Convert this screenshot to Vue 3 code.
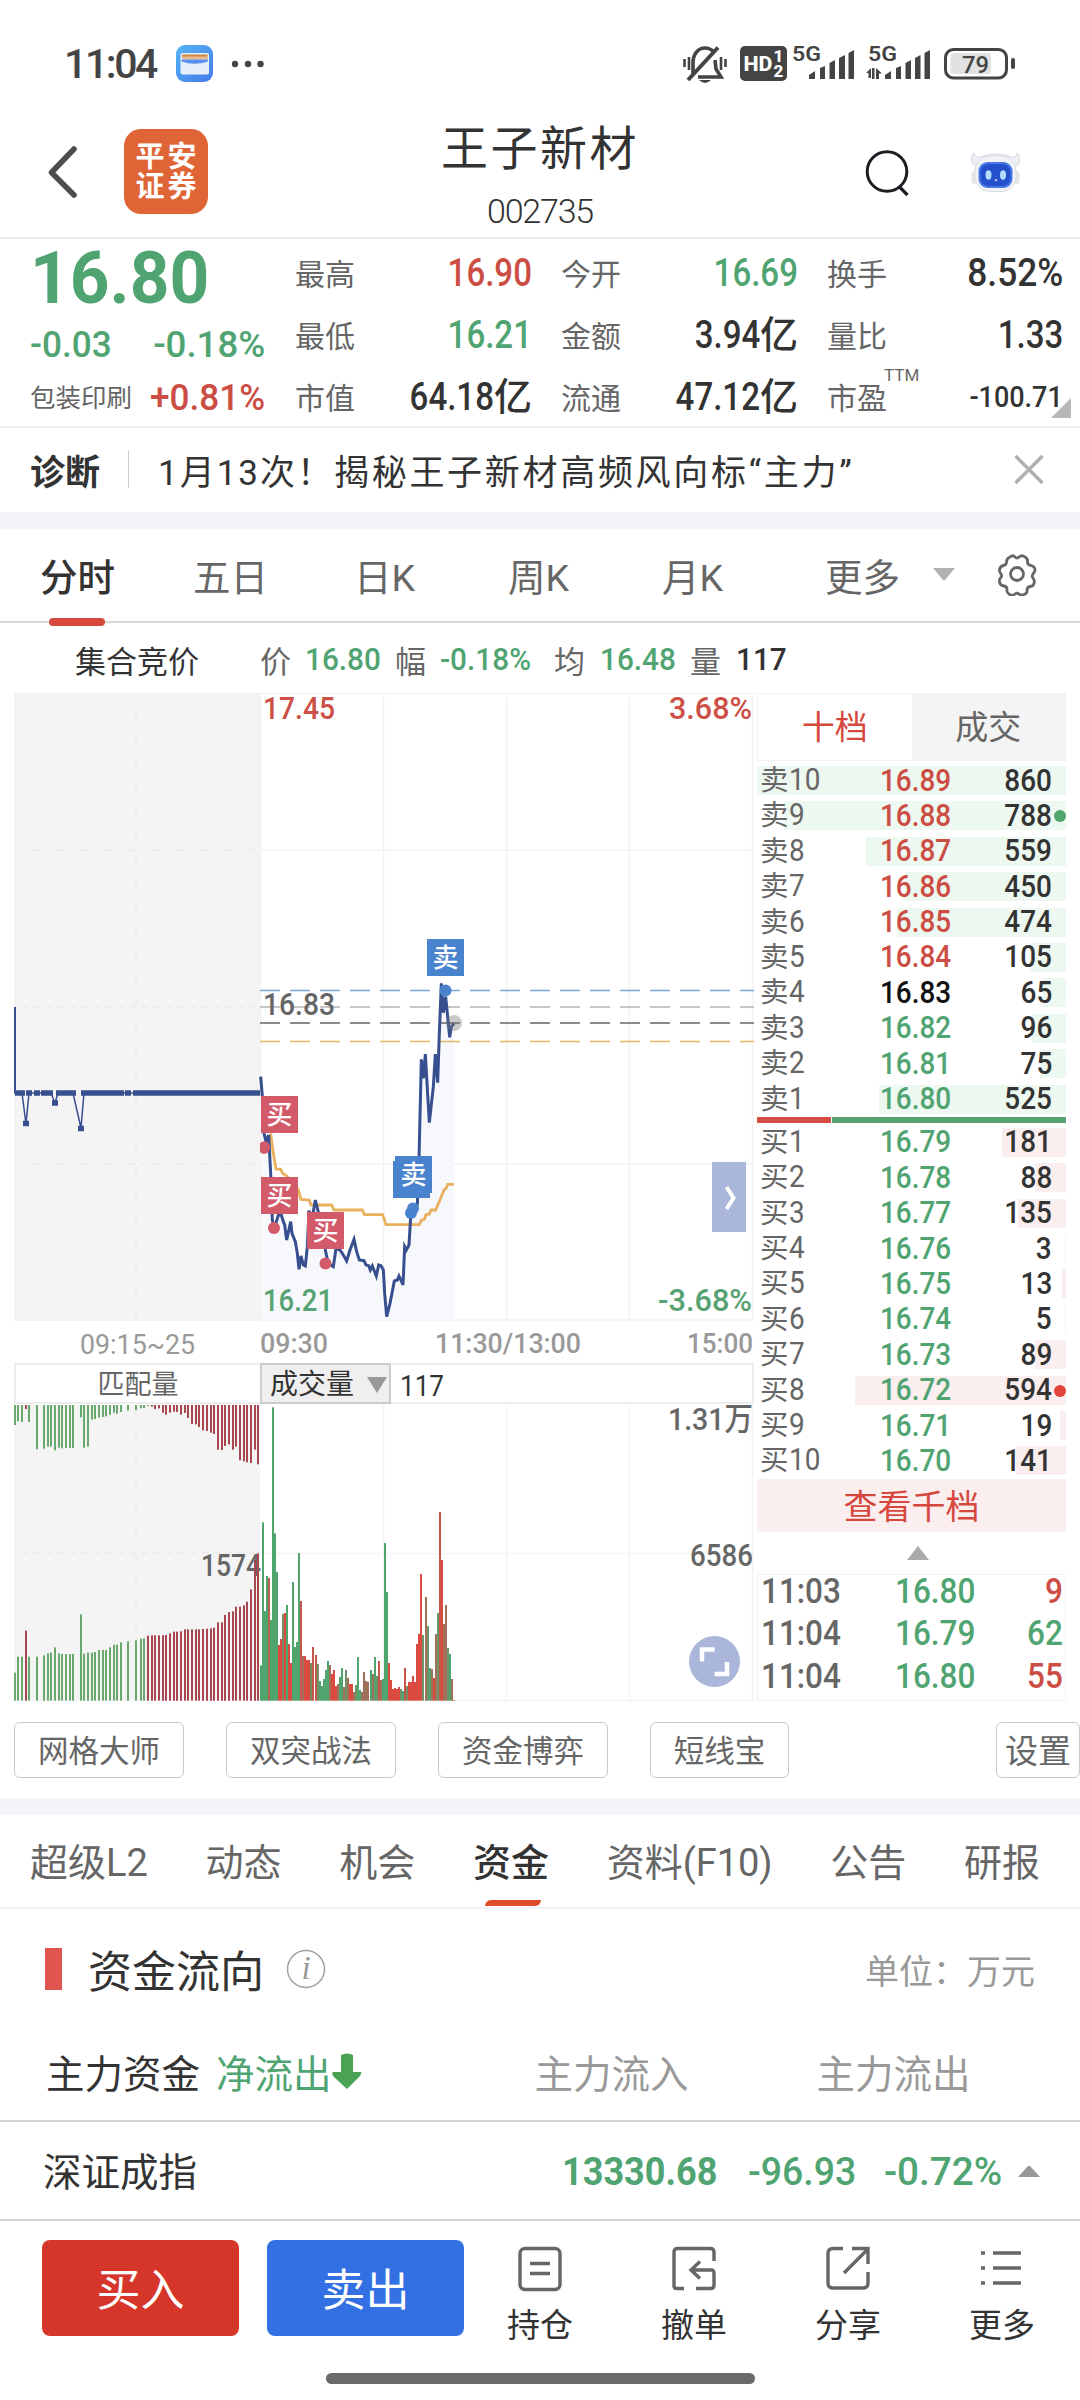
<template>
  <div class="page">
    <!-- status bar -->
    <div class="status">
      <span class="clock">11:04</span>
      <svg class="wallet" width="38" height="38" viewBox="0 0 38 38">
        <defs>
          <linearGradient id="wg" x1="0" y1="0" x2="1" y2="1">
            <stop offset="0" stop-color="#55b4f5" />
            <stop offset="1" stop-color="#467bea" />
          </linearGradient>
        </defs>
        <rect width="37" height="37" rx="9" fill="url(#wg)" />
        <rect x="4.500" y="8" width="28.500" height="21.500" rx="2" fill="#e6f0fd" />
        <rect x="6" y="9.500" width="25.500" height="4" fill="#d08646" />
        <rect x="6" y="11.500" width="25.500" height="3" fill="#eab98a" />
        <path d="M5.500 14.500h26.500v2q-13.500 4.500-26.500 0z" fill="#5a90ec" />
      </svg>
      <svg class="dots" width="34" height="8" viewBox="0 0 34 8">
        <circle cx="4" cy="4" r="3.200" /><circle cx="17" cy="4" r="3.200" /><circle cx="29.500" cy="4" r="3.200" />
      </svg>
      <svg class="signals" width="340" height="44" viewBox="680 42 340 44">
        <g fill="none" stroke="#444" stroke-width="3.600">
          <path d="M693 75V63c0-9 5-15 12-15 4 0 7 2 9 4M715 60l1 9 5 8h-23" />
          <path d="M718 47.500L688 80" stroke-width="4" />
          <path d="M684.500 59v8M689 57v13M725.500 59v8M721 57v13" stroke-width="2.600" />
        </g>
        <path d="M699 80h12q-6 6-12 0z" fill="#444" />
        <rect x="740" y="46" width="47" height="35" rx="5" fill="#444" />
        <text x="743.500" y="71" fill="#fff" font-size="21" font-weight="800" textLength="29" lengthAdjust="spacingAndGlyphs">HD</text>
        <text x="773.500" y="62" fill="#fff" font-size="17" font-weight="800">1</text>
        <text x="773.500" y="77" fill="#fff" font-size="17" font-weight="800">2</text>
        <g fill="#444">
          <text x="792" y="61" font-size="21" font-weight="600" textLength="29" lengthAdjust="spacingAndGlyphs">5G</text>
          <path d="M809 79v-4l6-4v8zM820 79V68l5-2v13zM829.500 79V63l5.500-3v19zM839 79V58l6-3v24zM848.500 79V53l5.500-3v29z" />
          <text x="868" y="61" font-size="21" font-weight="600" textLength="29" lengthAdjust="spacingAndGlyphs">5G</text>
          <path d="M866 73l5-5v10h-2.500v-5zM872 68h2.500v11h-2.500zM876 79V68l6 5.500h-3V79z" />
          <path d="M885 79v-4l6-4v8zM896 79V68l5-2v13zM905.500 79V63l5.500-3v19zM915 79V58l5.500-3v24zM924.500 79V53l5.500-3v29z" />
          <rect x="1011" y="58" width="4" height="11" rx="2" />
          <rect x="950.500" y="53" width="40.500" height="21" rx="3" fill="#e2e2e2" />
          <rect x="945.500" y="49.500" width="61" height="28.500" rx="8" fill="none" stroke="#444" stroke-width="3" />
          <text x="962" y="72.500" font-size="24" font-weight="500" textLength="27" lengthAdjust="spacingAndGlyphs">79</text>
        </g>
      </svg>
    </div>

    <!-- header -->
    <header class="header">
      <svg class="back" width="32" height="56" viewBox="0 0 32 56">
        <path d="M28 5L5.500 28.500 28 51" fill="none" stroke="#4d4d4d" stroke-width="5.500" stroke-linecap="round" stroke-linejoin="round" />
      </svg>
      <div class="logo"><span>平安</span><span>证券</span></div>
      <div class="title">
        <div class="name">王子新材</div>
        <div class="code">002735</div>
      </div>
      <svg class="search" width="46" height="50" viewBox="0 0 46 50">
        <circle cx="23" cy="22.500" r="19.800" fill="none" stroke="#1b1d22" stroke-width="3" />
        <path d="M35.500 38l8 8" stroke="#1b1d22" stroke-width="3.200" />
      </svg>
      <svg class="robot" width="52" height="44" viewBox="0 0 52 44">
        <path d="M7 17C0 14 0 6 4 3c1 4 3 5 6 4Q26 1 41 7c4 1 6-1 6-4 4 4 4 11-2 14z" fill="#eceef3" stroke="#d6d9e0" />
        <rect x="1.500" y="21" width="6" height="13" rx="3" fill="#e9e3e4" /><rect x="43.500" y="21" width="6" height="13" rx="3" fill="#e9e3e4" />
        <rect x="5" y="6" width="41" height="35.500" rx="15" fill="#f2f3f8" stroke="#dadde6" />
        <rect x="8.500" y="12" width="34" height="26" rx="9" fill="#4a78e8" />
        <rect x="10.500" y="14" width="30" height="22" rx="8" fill="#2450cc" />
        <ellipse cx="18.500" cy="25" rx="3" ry="4.800" fill="#b8dcff" /><ellipse cx="33" cy="25" rx="3" ry="4.800" fill="#b8dcff" />
        <path d="M24.500 29.500h3l-1.500 2z" fill="#fff" />
      </svg>
    </header>

    <!-- quote -->
    <section class="quote">
      <div class="main">
        <div class="price"><span class="num">16.80</span></div>
        <div class="chg green"><span class="num">-0.03</span><span class="num end pct">-0.18%</span></div>
        <div class="sector"><span class="sname">包装印刷</span><span class="num end red">+0.81%</span></div>
      </div>
      <div class="stats">
        <div v-for="s in stats" :key="s.label" class="stat">
          <span class="slabel">{{ s.label }}<sup v-if="s.sup">{{ s.sup }}</sup></span>
          <span class="sval" :class="[s.color, s.size]"><span class="num end">{{ s.value }}</span>{{ s.unit }}</span>
        </div>
      </div>
      <i class="corner"></i>
    </section>

    <section class="diag">
      <b>诊断</b>
      <i class="sep"></i>
      <span class="ddate">1月13次！</span>
      <span class="dtext">揭秘王子新材高频风向标“主力”</span>
      <svg width="34" height="34" viewBox="0 0 34 34"><path d="M3.500 4l27 27M30.500 4l-27 27" stroke="#b0b0b0" stroke-width="3.500" /></svg>
    </section>
    <div class="band"></div>

    <nav class="periods">
      <span v-for="p in periods" :key="p" class="period" :class="{ on: p === '分时' }">{{ p }}</span>
      <i class="down"></i>
      <svg class="gear" width="44" height="44" viewBox="0 0 44 44" fill="none" stroke="#666" stroke-width="2.800" stroke-linejoin="round">
        <path d="M15 5q3-2.500 5 0 2 2 4 0 3-2.500 6 0 3 1.500 2.500 5 0 3 3.500 3.500 4 1 4 4.500-.5 2.500-2 4-1.500 2 0 4 2 3 1 5.500-1 3-4 3-3 .5-3 4 .5 3-3 4-3 1.500-5-.5-2-1.500-4 0-3 2.500-6 0-2.500-1.500-2-4.500 0-3-3-3.500-4-.5-4.500-4-.5-2.500 1-4 2-2 .5-4-2-2.500-1.500-4.500 1-3.500 4-4 3-.5 3-3.500 0-3.500 3.500-5z" />
        <circle cx="22" cy="22" r="6.500" />
      </svg>
    </nav>

    <div class="tick">
      <span class="auction">集合竞价</span>
      <span>价</span><span class="num green">16.80</span>
      <span>幅</span><span class="num green">-0.18%</span>
      <span>均</span><span class="num green">16.48</span>
      <span>量</span><span class="num dark">117</span>
    </div>

    <section class="market">
      <div class="charts">
        <svg width="740" height="628" viewBox="14 693 740 628" class="chart">
          <rect x="14" y="693" width="246" height="628" fill="#f4f4f4" />
          <g stroke="#f2f2f2" stroke-width="1.600" fill="none">
            <path d="M14 693.500h740M260 850h494M260 1164h494M14 1320h740M383.500 697v623M506.500 697v623M629.500 697v623M752.500 697v623M260.500 697v623" />
            <path d="M136 699v620M21 850h234M21 1007h234M21 1164h234" stroke="#ebebeb" stroke-dasharray="7 5" />
          </g>
          <g transform="translate(240 900) scale(.33333)">
            <polygon :points="'62,1262 ' + price + ' 642,1262'" fill="#f6f8fc" />
          </g>
          <g stroke-width="1.300" stroke-dasharray="20 10">
            <path d="M260 990.500h494" stroke="#7aa5d6" />
            <path d="M260 1007h494" stroke="#c6c6c6" stroke-width="1.800" />
            <path d="M260 1023h494" stroke="#8c8c8c" stroke-width="1.800" />
            <path d="M260 1041.500h494" stroke="#e6b866" />
          </g>
          <g transform="translate(240 900) scale(.33333)" fill="none">
            <polyline :points="avg" stroke="#e9b15d" stroke-width="8.500" />
            <polyline :points="price" stroke="#374f8f" stroke-width="9" />
          </g>
          <g stroke="#374f8f" fill="none">
            <path d="M15 1007v86" stroke-width="2" />
            <path d="M14 1093H22l4 31 3-31h22l4 10 3-10h15l8 35 3-35h176" stroke-width="1.500" />
            <path d="M15 1093h10M26 1093h6M34 1093h6M41 1093h12M56 1093h20M81 1093h43M125 1093h6M133 1093h127" stroke-width="5.500" />
            <path d="M23 1123.500h6M52 1103h6M78 1128.500h6" stroke-width="5.500" />
          </g>
          <path d="M260 1143c3-3 10-2 10 4.500s-7 8-10 4.500z" fill="#d35a69" />
          <circle v-for="(d, i) in dots" :key="i" :cx="d[0]" :cy="d[1]" r="6" :fill="d[2]" />
          <circle cx="454" cy="1023" r="8" fill="#777" fill-opacity=".4" />
          <rect x="393" y="1161" width="37" height="37" fill="#4a83cd" />
          <g v-for="(t, i) in tags" :key="'t' + i">
            <rect :x="t.x" :y="t.y" width="37" height="37" :fill="t.side === '买' ? '#d35a69' : '#4a83cd'" />
            <text :x="t.x + 18.500" :y="t.y + 28" font-size="26" font-weight="500" fill="#fff" text-anchor="middle">{{ t.side }}</text>
          </g>
          <g font-size="31" font-weight="500">
            <text x="263" y="719" fill="#cc5045" textLength="72" lengthAdjust="spacingAndGlyphs">17.45</text>
            <text x="263" y="1014.500" fill="#666" textLength="72" lengthAdjust="spacingAndGlyphs">16.83</text>
            <text x="263" y="1310.500" fill="#57a273" textLength="70" lengthAdjust="spacingAndGlyphs">16.21</text>
            <text x="669" y="719" fill="#cc5045" textLength="83" lengthAdjust="spacingAndGlyphs">3.68%</text>
            <text x="658" y="1310.500" fill="#57a273" textLength="94" lengthAdjust="spacingAndGlyphs">-3.68%</text>
          </g>
          <rect x="712" y="1162" width="34" height="70" fill="#abb7da" />
          <path d="M726.500 1187l7 11-7 11" fill="none" stroke="#fff" stroke-width="4" />
        </svg>

        <svg width="740" height="42" viewBox="14 1321 740 42" class="chart" font-size="28" fill="#999">
          <text x="80" y="1353.500" textLength="115" lengthAdjust="spacingAndGlyphs">09:15~25</text>
          <g font-weight="500">
            <text x="260" y="1353" textLength="68" lengthAdjust="spacingAndGlyphs">09:30</text>
            <text x="435" y="1353" textLength="146" lengthAdjust="spacingAndGlyphs">11:30/13:00</text>
            <text x="687" y="1353" textLength="66" lengthAdjust="spacingAndGlyphs">15:00</text>
          </g>
        </svg>

        <div class="volhead">
          <span class="match">匹配量</span>
          <span class="voltype">成交量<i></i></span>
          <span class="num volnum">117</span>
        </div>

        <svg width="740" height="297" viewBox="14 1404 740 297" class="chart">
          <rect x="14" y="1405" width="246" height="296" fill="#f4f4f4" />
          <g stroke="#f3f3f3" stroke-width="1.600" fill="none">
            <path d="M383.500 1405v296M506.500 1405v296M629.500 1405v296M752.500 1405v296M260 1553.500h494M260 1700.500h494" />
            <path d="M136 1409v292M21 1553h234" stroke="#ebebeb" stroke-dasharray="7 5" />
          </g>
          <text x="201" y="1576" font-size="32" font-weight="500" fill="#666" textLength="60" lengthAdjust="spacingAndGlyphs">1574</text>
          <g v-for="b in auction" :key="'a' + b[0]" :fill="b[3] ? '#a94750' : '#69a96d'">
            <rect :x="b[0] / 3 - 1" y="1405" width="2" :height="(b[2] - 255) / 3" />
            <rect :x="b[0] / 3 - 1" :y="1320 + b[1] / 3" width="2" :height="(1142 - b[1]) / 3" />
          </g>
          <rect v-for="v in volumes" :key="'v' + v[0]" :x="v[0] / 3 - 1" :y="1320 + v[1] / 3" width="2" :height="(1142 - v[1]) / 3" :fill="v[2]" />
          <g font-size="32" font-weight="500" fill="#666">
            <text x="668" y="1430" textLength="85" lengthAdjust="spacingAndGlyphs">1.31万</text>
            <text x="690" y="1566" textLength="63" lengthAdjust="spacingAndGlyphs">6586</text>
          </g>
          <circle cx="714.500" cy="1661.500" r="25.500" fill="#abb7da" />
          <path d="M702 1661.500v-12h12.500M727 1662v12h-12.500" fill="none" stroke="#fff" stroke-width="4.500" />
        </svg>
      </div>

      <div class="book">
        <div class="btabs"><span class="on">十档</span><span>成交</span></div>
        <div class="side">
          <div v-for="r in sells" :key="r.n" class="row">
            <i class="depth" :style="{ width: r.w + 'px' }"></i>
            <span class="lv">卖<span class="num">{{ r.n }}</span></span>
            <span class="num pr" :class="r.c">{{ r.p }}</span>
            <span class="num end vol">{{ r.v }}</span>
            <i v-if="r.dot" class="dot"></i>
          </div>
        </div>
        <div class="ratio"><i></i></div>
        <div class="side buy">
          <div v-for="r in buys" :key="r.n" class="row">
            <i class="depth" :style="{ width: r.w + 'px' }"></i>
            <span class="lv">买<span class="num">{{ r.n }}</span></span>
            <span class="num pr green">{{ r.p }}</span>
            <span class="num end vol">{{ r.v }}</span>
            <i v-if="r.dot" class="dot"></i>
          </div>
        </div>
        <div class="thousand">查看千档</div>
        <div class="up"><i></i></div>
        <div class="trades">
          <div v-for="(t, i) in trades" :key="i" class="trade">
            <span class="num">{{ t.t }}</span>
            <span class="num green">{{ t.p }}</span>
            <span class="num end" :class="t.c">{{ t.v }}</span>
          </div>
        </div>
      </div>
    </section>

    <div class="tools">
      <span class="tool">网格大师</span>
      <span class="tool">双突战法</span>
      <span class="tool">资金博弈</span>
      <span class="tool short">短线宝</span>
      <span class="tool set">设置</span>
    </div>
    <div class="band"></div>

    <nav class="info">
      <span v-for="t in infoTabs" :key="t" :class="{ on: t === '资金' }">{{ t }}</span>
    </nav>

    <section class="flow">
      <div class="ftitle">
        <i class="mark"></i>
        <span>资金流向</span>
        <svg width="40" height="40" viewBox="0 0 40 40">
          <circle cx="20" cy="20" r="18.500" fill="none" stroke="#a0a0a0" stroke-width="1.500" />
          <text x="20" y="30" class="italic" text-anchor="middle">i</text>
        </svg>
        <em>单位：万元</em>
      </div>
      <div class="frow">
        <span>主力资金</span>
        <span class="green net">净流出</span>
        <svg width="30" height="38" viewBox="0 0 30 38"><path d="M9 3q6-3 12 0v17h8q1 2-2 5L15 37 2 25q-3-3-1-5h8z" fill="#4ba254" /></svg>
        <span class="grey fin">主力流入</span>
        <span class="grey fout">主力流出</span>
      </div>
    </section>

    <div class="index">
      <span class="iname">深证成指</span>
      <span class="num green bold">13330.68</span>
      <span class="num green">-96.93</span>
      <span class="num green pct">-0.72%</span>
      <i class="iup"></i>
    </div>

    <footer class="bottom">
      <span class="btn buybtn">买入</span>
      <span class="btn sellbtn">卖出</span>
      <div class="act">
        <svg viewBox="0 0 48 48"><rect x="4" y="3.500" width="40" height="41" rx="5" /><path d="M14 18.500h20M14 28.500h20" /></svg>
        <span>持仓</span>
      </div>
      <div class="act">
        <svg viewBox="0 0 48 48"><path d="M44 16V7q0-3.500-3.500-3.500H7.500Q4 3.500 4 7v34q0 2.500 3 2.500h7M26 43.500h14.500q3.500 0 3.500-3.500V28q0-3-3-3H22M30 16.500l-9 8.500 9 8.500" /></svg>
        <span>撤单</span>
      </div>
      <div class="act">
        <svg viewBox="0 0 48 48"><path d="M19 3.500H9Q4 3.500 4 8.500V38q0 5 5 5h30q5 0 5-5V27M28 3.500h16V19M43 5L20 28" /></svg>
        <span>分享</span>
      </div>
      <div class="act">
        <svg viewBox="0 0 48 48"><path d="M3 8h4M15 8h28M3 23h4M15 23h28M3 38h4M15 38h28" /></svg>
        <span>更多</span>
      </div>
    </footer>
    <div class="home"></div>
  </div>
</template>

<script setup>
import { ref } from "vue";

const stats = ref([
  { label: "最高", value: "16.90", color: "red" },
  { label: "今开", value: "16.69", color: "green" },
  { label: "换手", value: "8.52%", size: "pct" },
  { label: "最低", value: "16.21", color: "green" },
  { label: "金额", value: "3.94", unit: "亿" },
  { label: "量比", value: "1.33" },
  { label: "市值", value: "64.18", unit: "亿" },
  { label: "流通", value: "47.12", unit: "亿" },
  { label: "市盈", value: "-100.71", sup: "TTM", size: "small" },
]);

const periods = ["分时", "五日", "日K", "周K", "月K", "更多"];
const infoTabs = ["超级L2", "动态", "机会", "资金", "资料(F10)", "公告", "研报"];

const level = (n, p, v, w, c, dot) => ({ n, p, v, w, c, dot });
const sells = ref([
  level(10, "16.89", 860, 309, "red"),
  level(9, "16.88", 788, 282, "red", true),
  level(8, "16.87", 559, 200, "red"),
  level(7, "16.86", 450, 161, "red"),
  level(6, "16.85", 474, 169, "red"),
  level(5, "16.84", 105, 37, "red"),
  level(4, "16.83", 65, 23, "black"),
  level(3, "16.82", 96, 34, "green"),
  level(2, "16.81", 75, 26, "green"),
  level(1, "16.80", 525, 187, "green"),
]);
const buys = ref([
  level(1, "16.79", 181, 64),
  level(2, "16.78", 88, 31),
  level(3, "16.77", 135, 48),
  level(4, "16.76", 3, 1),
  level(5, "16.75", 13, 4),
  level(6, "16.74", 5, 1),
  level(7, "16.73", 89, 31),
  level(8, "16.72", 594, 211, "", true),
  level(9, "16.71", 19, 6),
  level(10, "16.70", 141, 50),
]);
const trades = ref([
  { t: "11:03", p: "16.80", v: 9, c: "red" },
  { t: "11:04", p: "16.79", v: 62, c: "green" },
  { t: "11:04", p: "16.80", v: 55, c: "red" },
]);

const tags = [
  { side: "卖", x: 427, y: 939 },
  { side: "买", x: 261, y: 1096 },
  { side: "买", x: 261, y: 1177 },
  { side: "买", x: 307, y: 1212 },
  { side: "卖", x: 395, y: 1156 },
];
const dots = [
  [274, 1228, "#d35a69"],
  [325.5, 1263.5, "#d35a69"],
  [411, 1213, "#4a83cd"],
  [413, 1208.5, "#4a83cd"],
  [445.5, 990.5, "#4a83cd"],
];

// price and average lines, three units per pixel
const price =
  "62,530 68,600 72,700 78,725 86,705 92,820 97,960 103,985 115,945 124,945 130,965 134,975 140,1020 152,965 156,1000 166,1025 172,1060 177,1108 183,1068 190,1095 196,1098 202,1040 207,932 216,960 220,935 226,900 236,940 250,1010 257,1055 265,1090 280,1100 288,1045 300,1050 310,1065 320,1083 330,1050 342,1018 350,1055 358,1080 372,1082 378,1095 386,1097 391,1110 397,1098 409,1128 416,1095 423,1097 430,1110 434,1180 440,1250 450,1210 463,1143 472,1140 477,1128 489,1155 494,1040 499,1050 507,1035 512,950 525,920 532,915 537,780 544,478 550,535 556,462 568,668 580,560 586,462 593,548 598,400 604,250 610,338 617,290 624,360 629,412 634,380 642,370";
const avg =
  "92,700 100,760 108,807 122,808 128,820 140,828 175,870 183,898 208,900 213,915 275,915 282,930 367,930 373,944 428,944 438,974 538,974 545,960 553,958 558,944 568,942 573,930 587,930 600,900 612,870 618,866 623,853 642,853";

// [x, matched top, unmatched end, red]
const auction = [
  [45, 1058, 315], [54, 1010, 304], [66, 1010, 306], [78, 932, 267, 1], [87, 1010, 306], [111, 1010, 388],
  [132, 1006, 386], [144, 1000, 380], [153, 998, 380], [165, 982, 391], [177, 1000, 383], [186, 1002, 385],
  [198, 1002, 384], [210, 1002, 384], [219, 1002, 384], [243, 883, 292], [252, 1001, 383], [264, 998, 380],
  [276, 998, 299], [285, 996, 297], [297, 990, 292], [309, 990, 291], [318, 990, 289], [330, 982, 284],
  [342, 974, 278], [351, 974, 281], [363, 967, 276], [384, 964, 272], [408, 961, 270], [423, 956, 265],
  [432, 955, 264], [444, 947, 257, 1], [456, 946, 260, 1], [465, 946, 267, 1], [477, 946, 265, 1],
  [489, 946, 278, 1], [498, 945, 284, 1], [510, 940, 278, 1], [522, 935, 275, 1], [531, 935, 276, 1],
  [543, 934, 284, 1], [555, 928, 279, 1], [564, 928, 294, 1], [576, 928, 312, 1], [588, 928, 313, 1],
  [597, 928, 321, 1], [609, 927, 331, 1], [621, 926, 333, 1], [633, 925, 338, 1], [642, 923, 342, 1],
  [654, 907, 389, 1], [666, 907, 390, 1], [675, 885, 378, 1], [687, 876, 373, 1], [699, 874, 389, 1],
  [708, 860, 380, 1], [720, 860, 421, 1], [732, 856, 424, 1], [741, 845, 427, 1], [753, 808, 429, 1],
  [765, 720, 389, 1], [774, 700, 433, 1],
];

const G = "#50a56f";
const R = "#db4a40";
const B = "#a0705a";
const volumes = [
  [783, 1036, G], [789, 607, G], [795, 873, G], [801, 768, G], [807, 774, "#b95f50"], [813, 900, G], [819, 262, G],
  [825, 640, G], [831, 756, G], [837, 975, R], [843, 957, R], [849, 882, "#7a8a60"], [855, 879, R], [861, 855, G],
  [867, 972, R], [873, 1029, R], [879, 786, G], [885, 981, G], [891, 966, G], [897, 699, G], [903, 843, "#c4564a"],
  [909, 1008, B], [915, 1008, R], [921, 1020, R], [927, 1020, R], [933, 1029, "#7a8a60"], [939, 981, "#c4564a"],
  [948, 1005, "#c4564a"], [954, 1032, "#6d9468"], [960, 1083, G], [966, 1098, G], [972, 1077, G], [978, 1050, G],
  [984, 1023, G], [990, 1035, B], [996, 1062, R], [1002, 1050, R], [1008, 1098, R], [1014, 1092, B],
  [1020, 1071, G], [1026, 1044, G], [1032, 1101, B], [1038, 1050, "#6d9468"], [1044, 1074, B], [1050, 1092, R],
  [1056, 1092, R], [1062, 1116, B], [1068, 1095, "#6d9468"], [1074, 1011, G], [1080, 1110, G], [1086, 1116, B],
  [1092, 1056, B], [1098, 1083, B], [1104, 1086, B], [1113, 1050, G], [1119, 1062, B], [1125, 1011, G],
  [1131, 1068, "#6d9468"], [1137, 1023, "#c4564a"], [1143, 1080, B], [1149, 1077, G], [1155, 669, G],
  [1161, 816, G], [1167, 1029, R], [1173, 1080, R], [1179, 1107, R], [1185, 1104, R], [1191, 1107, R],
  [1197, 1101, R], [1203, 1107, "#6d9468"], [1209, 1113, G], [1215, 1044, "#c4564a"], [1221, 1098, "#7a8a60"],
  [1227, 1086, R], [1233, 1086, R], [1239, 1068, R], [1245, 1086, R], [1251, 972, R], [1257, 942, R],
  [1263, 762, R], [1269, 945, "#6d9468"], [1278, 831, B], [1284, 918, "#6d9468"], [1290, 1044, G],
  [1296, 1047, B], [1302, 1074, R], [1308, 942, B], [1314, 879, "#6d9468"], [1320, 576, "#c4564a"],
  [1326, 720, R], [1332, 912, B], [1338, 855, B], [1344, 984, "#6d9468"], [1350, 1002, G], [1356, 1077, B],
  [1362, 1140, R],
];
</script>

<style>
body {
  background: #fff;
}
</style>

<style scoped>
.page {
  width: 1080px;
  height: 2400px;
  overflow: hidden;
  background: #fff;
  color: #333;
  font-family: Roboto, "Noto Sans CJK SC", sans-serif;
  white-space: nowrap;
}
.page * {
  box-sizing: border-box;
}
svg {
  display: block;
  flex: none;
}
.chart {
  overflow: visible;
}
i,
em {
  font-style: normal;
}
/* condensed figures, --sx tunes the width per block */
.num {
  display: inline-block;
  transform: scaleX(var(--sx, 0.87));
  transform-origin: left;
  font-weight: 500;
}
.num.end {
  transform-origin: right;
}
.green {
  color: #50a472 !important;
}
.red {
  color: #cc4d43 !important;
}
.black {
  color: #111;
}
.grey {
  color: #999;
}

/* status bar + header */
.status {
  height: 100px;
  padding: 28px 60px 0 64px;
  display: flex;
  align-items: center;
  color: #444;
}
.clock {
  font-size: 41px;
  font-weight: 500;
  width: 112px;
  letter-spacing: -2.4px;
}
.dots {
  margin-left: 17px;
  fill: #444;
}
.signals {
  margin-left: auto;
}
.header {
  height: 139px;
  border-bottom: 2px solid #ededed;
  display: flex;
  padding: 0 58px 0 46px;
}
.back {
  margin-top: 44px;
}
.logo {
  margin: 29px 0 0 46px;
  width: 84px;
  height: 85px;
  border-radius: 17px;
  background: #df6436;
  color: #fff;
  font-weight: 700;
  font-size: 29px;
  letter-spacing: 3px;
  line-height: 30px;
  padding-left: 3px;
  display: flex;
  flex-direction: column;
  align-items: center;
  justify-content: center;
}
.title {
  width: 300px;
  margin-left: 182px;
  text-align: center;
}
.name {
  font-size: 47px;
  letter-spacing: 2.5px;
  line-height: 60px;
  margin-top: 19px;
}
.code {
  font-size: 34px;
  font-weight: 300;
  line-height: 40px;
  margin-top: 12px;
  letter-spacing: -1.2px;
}
.search {
  margin: 49px 0 0 174px;
}
.robot {
  margin: 50px 0 0 60px;
}

/* quote */
.quote {
  height: 189px;
  border-bottom: 2px solid #ededed;
  display: flex;
  padding: 1px 17px 0 30px;
  position: relative;
}
.main {
  width: 235px;
  --sx: 0.95;
}
.price {
  font-size: 73px;
  line-height: 76px;
  color: #50a472;
}
.price .num {
  font-weight: 700;
}
.chg,
.sector {
  display: flex;
  justify-content: space-between;
  align-items: center;
  font-size: 37px;
  line-height: 44px;
}
.pct {
  --sx: 0.99;
}
.chg {
  margin-top: 7px;
}
.sector {
  margin-top: 9px;
}
.sname {
  font-size: 25.5px;
  color: #666;
}
.stats {
  margin: 2px 0 0 30px;
  display: grid;
  grid-template-columns: 237px 237px 236px;
  column-gap: 29px;
  grid-auto-rows: 62px;
}
.stat {
  display: flex;
  justify-content: space-between;
  align-items: center;
}
.slabel {
  font-size: 30px;
  color: #666;
  position: relative;
  margin-top: -3px;
}
.slabel sup {
  position: absolute;
  left: 57px;
  top: -9px;
  font-size: 17px;
  line-height: 20px;
}
.sval {
  font-size: 38px;
  font-weight: 500;
  line-height: 60px;
  display: flex;
}
.sval.pct {
  --sx: 0.93;
}
.sval.small {
  font-size: 30px;
  --sx: 0.9;
}
.corner {
  position: absolute;
  right: 9px;
  bottom: 8px;
  border: 10px solid transparent;
  border-right-color: #b8b8b8;
  border-bottom-color: #b8b8b8;
}
.diag {
  height: 84px;
  display: flex;
  align-items: center;
  padding: 0 34px 2px 30px;
}
.diag b {
  font-size: 35px;
  width: 98px;
}
.sep {
  width: 1px;
  height: 38px;
  background: #ccc;
  margin-right: 29px;
}
.ddate,
.dtext {
  font-size: 35px;
  letter-spacing: 2.7px;
}
.ddate {
  letter-spacing: 2px;
}
.dtext {
  flex: 1;
}
.band {
  height: 17px;
  background: #f3f5fa;
}

/* period tabs */
.periods {
  height: 94px;
  border-bottom: 2px solid #d8d8d8;
  display: grid;
  grid-template-columns: 153px 161px 154px 154px 163px 108px 62px 44px;
  align-items: center;
  padding: 0 0 2px 40px;
}
.period {
  font-size: 37.5px;
  color: #666;
  position: relative;
}
.period.on {
  color: #333;
  font-weight: 500;
}
.period.on::after {
  content: "";
  position: absolute;
  left: 9px;
  bottom: -24px;
  width: 56px;
  height: 8px;
  border-radius: 4px;
  background: #d6483e;
}
.down {
  border: 11px solid transparent;
  border-top: 13px solid #b0b0b0;
  border-bottom: 0;
  width: 22px;
}
.tick {
  height: 70px;
  padding: 2px 0 0 75px;
  display: grid;
  grid-template-columns: 185px 45px 90px 45px 114px 46px 90px 46px 80px;
  align-items: center;
  font-size: 31px;
  color: #666;
  --sx: 0.96;
}
.auction,
.dark {
  color: #333;
}

/* charts */
.market {
  display: flex;
  padding-left: 14px;
  height: 1008px;
}
.charts {
  width: 740px;
}
.volhead {
  height: 41px;
  border: 2px solid #ededed;
  display: flex;
  font-size: 28px;
  color: #333;
  line-height: 41px;
}
.match {
  width: 244px;
  text-align: center;
  font-size: 27px;
  color: #666;
}
.voltype {
  width: 131px;
  margin: -2px 0;
  padding: 2px 2px 0 8px;
  border: 2px solid #ccc;
  background: #efefef;
  display: flex;
  align-items: center;
  justify-content: space-between;
}
.voltype i {
  border: 10px solid transparent;
  border-top: 16px solid #999;
  border-bottom: 0;
}
.volnum {
  font-size: 30px;
  font-weight: 400;
  margin-left: 9px;
}

/* order book */
.book {
  width: 309px;
  margin-left: 3px;
  --sx: 0.9;
}
.btabs {
  height: 68px;
  display: flex;
  font-size: 33px;
  line-height: 67px;
  text-align: center;
  border: 1px solid #f2f2f2;
  color: #666;
}
.btabs span {
  flex: 1;
  background: #f4f4f4;
}
.btabs .on {
  background: #fff;
  color: #d6483e;
}
.side {
  padding-top: 5px;
}
.row {
  position: relative;
  height: 35.4px;
  display: grid;
  grid-template-columns: 123px 100px 72px;
  align-items: center;
  font-size: 31px;
  line-height: 27px;
  padding-bottom: 12px;
}
.depth {
  position: absolute;
  right: 0;
  top: 0;
  height: 29px;
  background: #edf8f0;
}
.buy .depth {
  background: #fbeeee;
}
.row .lv {
  position: relative;
  padding-left: 3px;
  font-size: 28.5px;
  color: #666;
}
.lv .num {
  font-size: 31px;
  font-weight: 400;
}
.row .vol {
  justify-self: end;
}
.dot {
  position: absolute;
  right: 0;
  top: 9px;
  width: 12px;
  height: 12px;
  border-radius: 6px;
  background: #4fa66e;
}
.buy .dot {
  background: #e0453c;
}
.ratio {
  height: 6px;
  margin: -3px 0 0;
  background: #57a273;
}
.ratio i {
  display: block;
  height: 6px;
  width: 75px;
  background: #d44c43;
  border-right: 1px solid #fff;
}
.thousand {
  height: 53px;
  margin-top: -3px;
  background: #fbeeee;
  color: #d6483e;
  font-size: 34px;
  line-height: 56px;
  text-align: center;
}
.up {
  height: 42px;
  display: flex;
  align-items: center;
  padding-left: 150px;
}
.up i {
  border: 11px solid transparent;
  border-bottom: 14px solid #aaa;
  border-top: 0;
}
.trades {
  border: 1px solid #f4f4f4;
  height: 127px;
  padding: 0 2px 0 3px;
  font-size: 35px;
}
.trade {
  height: 42.5px;
  line-height: 34px;
  display: grid;
  grid-template-columns: 134px 100px 68px;
  color: #666;
}
.trade .end {
  justify-self: end;
}

/* toolbar */
.tools {
  height: 97px;
  padding: 21px 0 0 14px;
  display: flex;
  gap: 42px;
}
.tool {
  width: 170px;
  height: 56px;
  border: 1.5px solid #c8c8c8;
  border-radius: 6px;
  text-align: center;
  font-size: 30.5px;
  line-height: 57px;
  color: #666;
}
.tool.short {
  width: 139px;
}
.tool.set {
  width: 84px;
  margin-left: auto;
  font-size: 33px;
}
.info {
  height: 94px;
  border-bottom: 2px solid #f2f2f2;
  display: flex;
  justify-content: space-between;
  padding: 0 40px 0 30px;
  font-size: 38px;
  line-height: 97px;
  color: #666;
}
.info .on {
  color: #333;
  font-weight: 500;
  position: relative;
}
.info .on::after {
  content: "";
  position: absolute;
  left: 12px;
  bottom: 1px;
  width: 56px;
  height: 6px;
  border-radius: 6px 0;
  background: #e04b2c;
}

/* money flow */
.flow {
  height: 213px;
  border-bottom: 2px solid #d2d2d2;
}
.ftitle {
  height: 120px;
  display: flex;
  align-items: center;
  padding: 0 45px;
  font-size: 44px;
}
.mark {
  width: 17px;
  height: 42px;
  background: #e0554e;
  margin-right: 26px;
}
.ftitle svg {
  margin-left: 22px;
}
.italic {
  font-family: "Liberation Serif", serif;
  font-style: italic;
  font-size: 33px;
  fill: #999;
}
.ftitle em {
  margin-left: auto;
  font-size: 34px;
  color: #999;
}
.frow {
  height: 84px;
  display: flex;
  align-items: center;
  padding-left: 46px;
  font-size: 38.5px;
}
.net {
  margin-left: 16px;
}
.fin {
  margin-left: 173px;
}
.fout {
  margin-left: 128px;
}
.index {
  height: 99px;
  border-bottom: 2px solid #d2d2d2;
  padding: 2px 0 0 43px;
  display: grid;
  grid-template-columns: 519px 186px 136px 134px 22px;
  align-items: center;
  font-size: 39px;
  --sx: 0.96;
}
.iname {
  font-size: 38.5px;
  margin-top: -5px;
}
.index .bold {
  font-weight: 700;
  --sx: 0.925;
}
.iup {
  border: 10px solid transparent;
  border-bottom: 11px solid #999;
  border-top: 0;
}

/* bottom bar */
.bottom {
  height: 152px;
  padding: 19px 0 0 42px;
  display: flex;
}
.btn {
  flex: none;
  width: 197px;
  height: 96px;
  border-radius: 8px;
  color: #fff;
  font-size: 44px;
  line-height: 102px;
  text-align: center;
}
.buybtn {
  background: #d6352a;
}
.sellbtn {
  background: #3370e3;
  margin-left: 28px;
}
.act {
  flex: none;
  width: 154px;
  display: flex;
  flex-direction: column;
  align-items: center;
  font-size: 33px;
  line-height: 44px;
}
.act:nth-child(3) {
  margin-left: -1px;
}
.act svg {
  width: 48px;
  height: 48px;
  margin: 5px 0 11px;
  fill: none;
  stroke: #666;
  stroke-width: 3.4;
}
.home {
  width: 429px;
  height: 11px;
  border-radius: 6px;
  background: #6a6a6a;
  margin: 0 auto;
}
</style>
